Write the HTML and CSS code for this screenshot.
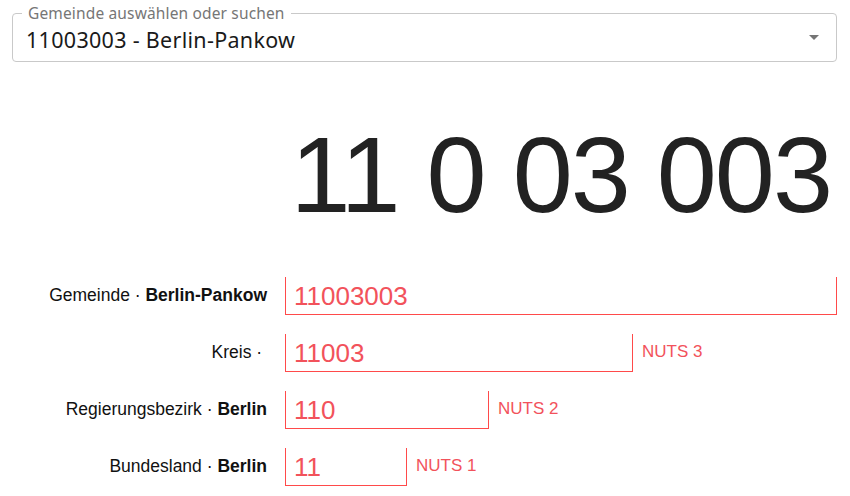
FILE: index.html
```html
<!DOCTYPE html>
<html lang="de">
<head>
<meta charset="utf-8">
<link rel="stylesheet" href="styles.css">
</head>
<body>
<div class="page">
  <div class="select">
    <span class="select-label">Gemeinde auswählen oder suchen</span>
    <span class="select-value">11003003 - Berlin-Pankow</span>
    <svg class="select-arrow" width="10" height="5" viewBox="0 0 10 5"><path d="M0 0H10L5 5Z" fill="#757575"/></svg>
  </div>

  <div class="code">11 0 03 003</div>

  <div class="rows">
    <div class="row">
      <div class="label">Gemeinde · <b>Berlin-Pankow</b></div>
      <div class="field">
        <div class="box w8">11003003</div>
      </div>
    </div>
    <div class="row">
      <div class="label">Kreis ·&nbsp;</div>
      <div class="field">
        <div class="box w5">11003</div>
        <div class="nuts">NUTS 3</div>
      </div>
    </div>
    <div class="row">
      <div class="label">Regierungsbezirk · <b>Berlin</b></div>
      <div class="field">
        <div class="box w3">110</div>
        <div class="nuts">NUTS 2</div>
      </div>
    </div>
    <div class="row">
      <div class="label">Bundesland · <b>Berlin</b></div>
      <div class="field">
        <div class="box w2">11</div>
        <div class="nuts">NUTS 1</div>
      </div>
    </div>
  </div>
</div>
</body>
</html>
```

FILE: styles.css
```css
html, body {
  margin: 0;
  padding: 0;
  background: #ffffff;
}

body {
  font-family: "Liberation Sans", Arial, Helvetica, sans-serif;
  color: #1a1a1a;
}

.page {
  padding: 13px 13px 0 12px;
}

.select {
  position: relative;
  box-sizing: border-box;
  height: 49px;
  border: 1px solid #c9c9c9;
  border-radius: 4px;
  display: flex;
  align-items: center;
  padding: 4px 17px 0 13px;
  font-family: "Noto Sans", "Open Sans", sans-serif;
}

.select-label {
  position: absolute;
  top: -10px;
  left: 9px;
  padding: 0 6px;
  background: #ffffff;
  font-size: 15.5px;
  line-height: 18px;
  letter-spacing: 0.15px;
  color: #767676;
}

.select-value {
  flex: 1;
  font-size: 21.5px;
  line-height: 26px;
  letter-spacing: 0.3px;
  color: #1a1a1a;
}

.select-arrow {
  display: block;
  margin-top: -5px;
}

.code {
  margin-top: 59px;
  text-align: right;
  padding-right: 6px;
  font-size: 108px;
  line-height: 108px;
  letter-spacing: -2px;
  color: #222222;
}

.rows {
  margin-top: 48px;
  display: flex;
  flex-direction: column;
  gap: 19px;
}

.row {
  display: grid;
  grid-template-columns: 255px 1fr;
  column-gap: 18px;
  height: 38px;
}

.label {
  text-align: right;
  font-size: 17.5px;
  line-height: 20px;
  padding-top: 8px;
  color: #111111;
  white-space: nowrap;
}

.label b {
  font-weight: 700;
}

.field {
  display: flex;
  align-items: flex-start;
}

.box {
  box-sizing: border-box;
  height: 38px;
  border: 1px solid #ff4a4a;
  border-top: none;
  padding: 4px 0 0 8px;
  font-size: 26px;
  line-height: 30px;
  color: #f2525b;
}

.w8 { width: 552px; }
.w5 { width: 348px; }
.w3 { width: 204px; }
.w2 { width: 122px; }

.nuts {
  margin-left: 9px;
  padding-top: 8px;
  font-size: 17px;
  line-height: 20px;
  color: #f2525b;
}
```
